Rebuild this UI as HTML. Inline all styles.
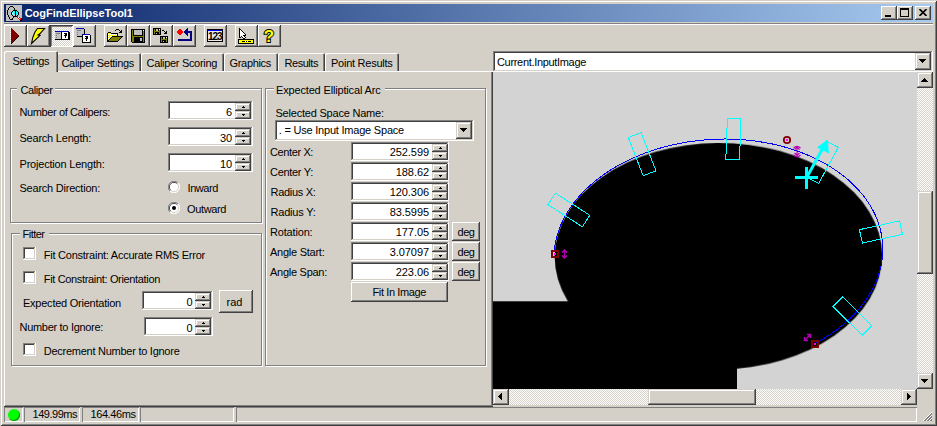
<!DOCTYPE html>
<html><head><meta charset="utf-8"><title>CogFindEllipseTool1</title><style>
html,body{margin:0;padding:0}
body{width:937px;height:426px;position:relative;overflow:hidden;background:#d4d0c8;font-family:"Liberation Sans",sans-serif;font-size:11px;color:#000}
.a,.t,.sk,.rb,.rb2,.grp,.tab{position:absolute;box-sizing:border-box}
.t{white-space:nowrap;line-height:12px;height:12px}
.tt{font-weight:bold;color:#fff}
.sk{box-shadow:inset -1px -1px 0 #fff,inset 1px 1px 0 #808080,inset -2px -2px 0 #d4d0c8,inset 2px 2px 0 #404040}
.rb{background:#d4d0c8;box-shadow:inset -1px -1px 0 #404040,inset 1px 1px 0 #fff,inset -2px -2px 0 #808080}
.rb2{background:#d4d0c8;box-shadow:inset -1px -1px 0 #404040,inset 1px 1px 0 #d4d0c8,inset -2px -2px 0 #808080,inset 2px 2px 0 #fff}
.grp{border:1px solid #808080;box-shadow:1px 1px 0 #fff,inset 1px 1px 0 #fff}
.dith{background:repeating-conic-gradient(#fff 0% 25%,#d4d0c8 0% 50%) 0 0/2px 2px}
.tab{background:#d4d0c8;border-top-left-radius:2px;border-top-right-radius:2px;box-shadow:inset 1px 1px 0 #fff,inset -1px 0 0 #404040,inset -2px 0 0 #808080}
</style></head><body>
<div class="a" style="left:0px;top:0px;width:937px;height:426px;background:#d4d0c8;box-shadow:inset 1px 1px 0 #d4d0c8,inset -1px -1px 0 #404040,inset 2px 2px 0 #fff,inset -2px -2px 0 #808080"></div>
<div class="a" style="left:4px;top:4px;width:929px;height:18px;background:linear-gradient(90deg,#0a246a,#a6caf0);"></div>
<div class="rb" style="left:881px;top:6px;width:16px;height:14px"></div>
<div class="rb" style="left:897px;top:6px;width:16px;height:14px"></div>
<div class="rb" style="left:915px;top:6px;width:16px;height:14px"></div>
<div class="a" style="left:885px;top:15px;width:6px;height:2px;background:#000;"></div>
<div class="a" style="left:900px;top:8px;width:9px;height:9px;border:1px solid #000;border-top-width:2px;box-sizing:border-box"></div>
<svg class="a" style="left:919px;top:9px" width="8" height="7" shape-rendering="crispEdges"><path d="M0.5 0 L7.5 7 M7.5 0 L0.5 7" stroke="#000" stroke-width="1.6" shape-rendering="auto"/></svg>
<div class="a" style="left:4px;top:23px;width:929px;height:1px;background:#808080;"></div>
<div class="a" style="left:4px;top:24px;width:929px;height:1px;background:#fff;"></div>
<div class="rb" style="left:4px;top:25px;width:23px;height:22px"></div>
<div class="rb" style="left:27px;top:25px;width:23px;height:22px"></div>
<div class="rb" style="left:73px;top:25px;width:23px;height:22px"></div>
<div class="rb" style="left:104px;top:25px;width:23px;height:22px"></div>
<div class="rb" style="left:127px;top:25px;width:23px;height:22px"></div>
<div class="rb" style="left:150px;top:25px;width:23px;height:22px"></div>
<div class="rb" style="left:173px;top:25px;width:23px;height:22px"></div>
<div class="rb" style="left:204px;top:25px;width:23px;height:22px"></div>
<div class="rb" style="left:235px;top:25px;width:23px;height:22px"></div>
<div class="rb" style="left:258px;top:25px;width:23px;height:22px"></div>
<div class="a dith" style="left:50px;top:25px;width:23px;height:22px;box-shadow:inset 1px 1px 0 #404040,inset -1px -1px 0 #fff,inset 2px 2px 0 #808080"></div>
<svg class="a" style="left:6px;top:5px;" width="16" height="16" shape-rendering="crispEdges"><rect x="0" y="0" width="16" height="1" fill="#c0c0c0"/><rect x="0" y="1" width="4" height="1" fill="#c0c0c0"/><rect x="4" y="1" width="3" height="1" fill="#000"/><rect x="7" y="1" width="9" height="1" fill="#c0c0c0"/><rect x="0" y="2" width="3" height="1" fill="#c0c0c0"/><rect x="3" y="2" width="1" height="1" fill="#000"/><rect x="4" y="2" width="3" height="1" fill="#c0c0c0"/><rect x="7" y="2" width="1" height="1" fill="#000"/><rect x="8" y="2" width="8" height="1" fill="#c0c0c0"/><rect x="0" y="3" width="2" height="1" fill="#c0c0c0"/><rect x="2" y="3" width="1" height="1" fill="#000"/><rect x="3" y="3" width="5" height="1" fill="#c0c0c0"/><rect x="8" y="3" width="1" height="1" fill="#000"/><rect x="9" y="3" width="7" height="1" fill="#c0c0c0"/><rect x="0" y="4" width="2" height="1" fill="#c0c0c0"/><rect x="2" y="4" width="1" height="1" fill="#000"/><rect x="3" y="4" width="5" height="1" fill="#c0c0c0"/><rect x="8" y="4" width="1" height="1" fill="#000"/><rect x="9" y="4" width="7" height="1" fill="#c0c0c0"/><rect x="0" y="5" width="1" height="1" fill="#c0c0c0"/><rect x="1" y="5" width="1" height="1" fill="#000"/><rect x="2" y="5" width="5" height="1" fill="#c0c0c0"/><rect x="7" y="5" width="4" height="1" fill="#000"/><rect x="11" y="5" width="5" height="1" fill="#c0c0c0"/><rect x="0" y="6" width="1" height="1" fill="#c0c0c0"/><rect x="1" y="6" width="1" height="1" fill="#000"/><rect x="2" y="6" width="4" height="1" fill="#c0c0c0"/><rect x="6" y="6" width="1" height="1" fill="#000"/><rect x="7" y="6" width="2" height="1" fill="#00ffff"/><rect x="9" y="6" width="1" height="1" fill="#000"/><rect x="10" y="6" width="1" height="1" fill="#00ffff"/><rect x="11" y="6" width="1" height="1" fill="#000"/><rect x="12" y="6" width="4" height="1" fill="#c0c0c0"/><rect x="0" y="7" width="1" height="1" fill="#c0c0c0"/><rect x="1" y="7" width="1" height="1" fill="#000"/><rect x="2" y="7" width="3" height="1" fill="#c0c0c0"/><rect x="5" y="7" width="1" height="1" fill="#000"/><rect x="6" y="7" width="1" height="1" fill="#00ffff"/><rect x="7" y="7" width="1" height="1" fill="#fff"/><rect x="8" y="7" width="1" height="1" fill="#00ffff"/><rect x="9" y="7" width="1" height="1" fill="#000"/><rect x="10" y="7" width="2" height="1" fill="#00ffff"/><rect x="12" y="7" width="1" height="1" fill="#000"/><rect x="13" y="7" width="3" height="1" fill="#c0c0c0"/><rect x="0" y="8" width="1" height="1" fill="#c0c0c0"/><rect x="1" y="8" width="1" height="1" fill="#000"/><rect x="2" y="8" width="3" height="1" fill="#c0c0c0"/><rect x="5" y="8" width="1" height="1" fill="#000"/><rect x="6" y="8" width="1" height="1" fill="#fff"/><rect x="7" y="8" width="2" height="1" fill="#00ffff"/><rect x="9" y="8" width="1" height="1" fill="#000"/><rect x="10" y="8" width="2" height="1" fill="#00ffff"/><rect x="12" y="8" width="1" height="1" fill="#000"/><rect x="13" y="8" width="3" height="1" fill="#c0c0c0"/><rect x="0" y="9" width="1" height="1" fill="#c0c0c0"/><rect x="1" y="9" width="1" height="1" fill="#000"/><rect x="2" y="9" width="3" height="1" fill="#c0c0c0"/><rect x="5" y="9" width="1" height="1" fill="#000"/><rect x="6" y="9" width="1" height="1" fill="#00ffff"/><rect x="7" y="9" width="1" height="1" fill="#fff"/><rect x="8" y="9" width="1" height="1" fill="#c0c0c0"/><rect x="9" y="9" width="1" height="1" fill="#000"/><rect x="10" y="9" width="1" height="1" fill="#00ffff"/><rect x="11" y="9" width="1" height="1" fill="#c0c0c0"/><rect x="12" y="9" width="1" height="1" fill="#000"/><rect x="13" y="9" width="3" height="1" fill="#c0c0c0"/><rect x="0" y="10" width="2" height="1" fill="#c0c0c0"/><rect x="2" y="10" width="1" height="1" fill="#000"/><rect x="3" y="10" width="3" height="1" fill="#c0c0c0"/><rect x="6" y="10" width="1" height="1" fill="#000"/><rect x="7" y="10" width="2" height="1" fill="#c0c0c0"/><rect x="9" y="10" width="1" height="1" fill="#000"/><rect x="10" y="10" width="1" height="1" fill="#c0c0c0"/><rect x="11" y="10" width="1" height="1" fill="#000"/><rect x="12" y="10" width="4" height="1" fill="#c0c0c0"/><rect x="0" y="11" width="2" height="1" fill="#c0c0c0"/><rect x="2" y="11" width="1" height="1" fill="#000"/><rect x="3" y="11" width="4" height="1" fill="#c0c0c0"/><rect x="7" y="11" width="4" height="1" fill="#000"/><rect x="11" y="11" width="1" height="1" fill="#ff0000"/><rect x="12" y="11" width="4" height="1" fill="#c0c0c0"/><rect x="0" y="12" width="3" height="1" fill="#c0c0c0"/><rect x="3" y="12" width="1" height="1" fill="#000"/><rect x="4" y="12" width="3" height="1" fill="#c0c0c0"/><rect x="7" y="12" width="1" height="1" fill="#000"/><rect x="8" y="12" width="3" height="1" fill="#c0c0c0"/><rect x="11" y="12" width="1" height="1" fill="#ff0000"/><rect x="12" y="12" width="1" height="1" fill="#fff"/><rect x="13" y="12" width="1" height="1" fill="#ff0000"/><rect x="14" y="12" width="2" height="1" fill="#c0c0c0"/><rect x="0" y="13" width="3" height="1" fill="#c0c0c0"/><rect x="3" y="13" width="1" height="1" fill="#000"/><rect x="4" y="13" width="2" height="1" fill="#c0c0c0"/><rect x="6" y="13" width="1" height="1" fill="#000"/><rect x="7" y="13" width="5" height="1" fill="#c0c0c0"/><rect x="12" y="13" width="1" height="1" fill="#ff0000"/><rect x="13" y="13" width="1" height="1" fill="#fff"/><rect x="14" y="13" width="1" height="1" fill="#ff0000"/><rect x="15" y="13" width="1" height="1" fill="#000"/><rect x="0" y="14" width="4" height="1" fill="#c0c0c0"/><rect x="4" y="14" width="3" height="1" fill="#000"/><rect x="7" y="14" width="6" height="1" fill="#c0c0c0"/><rect x="13" y="14" width="2" height="1" fill="#ff0000"/><rect x="15" y="14" width="1" height="1" fill="#000"/><rect x="0" y="15" width="14" height="1" fill="#c0c0c0"/><rect x="14" y="15" width="2" height="1" fill="#000"/></svg>
<svg class="a" style="left:10px;top:28px;" width="9" height="16" shape-rendering="crispEdges"><rect x="0" y="0" width="1" height="1" fill="#fff"/><rect x="1" y="0" width="1" height="1" fill="#800000"/><rect x="1" y="1" width="2" height="1" fill="#800000"/><rect x="0" y="2" width="1" height="1" fill="#fff"/><rect x="1" y="2" width="3" height="1" fill="#800000"/><rect x="1" y="3" width="4" height="1" fill="#800000"/><rect x="0" y="4" width="1" height="1" fill="#fff"/><rect x="1" y="4" width="5" height="1" fill="#800000"/><rect x="1" y="5" width="6" height="1" fill="#800000"/><rect x="0" y="6" width="1" height="1" fill="#fff"/><rect x="1" y="6" width="7" height="1" fill="#800000"/><rect x="1" y="7" width="8" height="1" fill="#800000"/><rect x="0" y="8" width="1" height="1" fill="#fff"/><rect x="1" y="8" width="7" height="1" fill="#800000"/><rect x="8" y="8" width="1" height="1" fill="#000"/><rect x="1" y="9" width="6" height="1" fill="#800000"/><rect x="7" y="9" width="1" height="1" fill="#000"/><rect x="0" y="10" width="1" height="1" fill="#fff"/><rect x="1" y="10" width="5" height="1" fill="#800000"/><rect x="6" y="10" width="1" height="1" fill="#000"/><rect x="1" y="11" width="4" height="1" fill="#800000"/><rect x="5" y="11" width="1" height="1" fill="#000"/><rect x="0" y="12" width="1" height="1" fill="#fff"/><rect x="1" y="12" width="3" height="1" fill="#800000"/><rect x="4" y="12" width="1" height="1" fill="#000"/><rect x="1" y="13" width="2" height="1" fill="#800000"/><rect x="3" y="13" width="1" height="1" fill="#000"/><rect x="0" y="14" width="1" height="1" fill="#fff"/><rect x="1" y="14" width="1" height="1" fill="#800000"/><rect x="2" y="14" width="1" height="1" fill="#000"/><rect x="1" y="15" width="1" height="1" fill="#000"/></svg>
<svg class="a" style="left:27px;top:25px" width="23" height="22"><polygon points="10.5,3.5 17.5,3.5 12.8,8.8 11,10 13,10.3 4.5,18.5 5.8,12.5 8,7" fill="#ffff00" stroke="#000" stroke-width="1.1" stroke-linejoin="miter"/></svg>
<svg class="a" style="left:55px;top:31px;" width="15" height="9" shape-rendering="crispEdges"><rect x="0" y="0" width="14" height="1" fill="#0000b0"/><rect x="0" y="1" width="6" height="1" fill="#c0c0c0"/><rect x="6" y="1" width="1" height="1" fill="#000"/><rect x="7" y="1" width="6" height="1" fill="#fff"/><rect x="13" y="1" width="2" height="1" fill="#000"/><rect x="0" y="2" width="1" height="1" fill="#c0c0c0"/><rect x="1" y="2" width="4" height="1" fill="#808080"/><rect x="5" y="2" width="1" height="1" fill="#c0c0c0"/><rect x="6" y="2" width="1" height="1" fill="#000"/><rect x="7" y="2" width="2" height="1" fill="#fff"/><rect x="9" y="2" width="3" height="1" fill="#000"/><rect x="12" y="2" width="1" height="1" fill="#fff"/><rect x="13" y="2" width="2" height="1" fill="#000"/><rect x="0" y="3" width="6" height="1" fill="#c0c0c0"/><rect x="6" y="3" width="1" height="1" fill="#000"/><rect x="7" y="3" width="3" height="1" fill="#fff"/><rect x="10" y="3" width="2" height="1" fill="#000"/><rect x="12" y="3" width="1" height="1" fill="#fff"/><rect x="13" y="3" width="2" height="1" fill="#000"/><rect x="0" y="4" width="1" height="1" fill="#c0c0c0"/><rect x="1" y="4" width="1" height="1" fill="#808080"/><rect x="2" y="4" width="4" height="1" fill="#c0c0c0"/><rect x="6" y="4" width="1" height="1" fill="#000"/><rect x="7" y="4" width="2" height="1" fill="#fff"/><rect x="9" y="4" width="3" height="1" fill="#000"/><rect x="12" y="4" width="1" height="1" fill="#fff"/><rect x="13" y="4" width="2" height="1" fill="#000"/><rect x="0" y="5" width="6" height="1" fill="#c0c0c0"/><rect x="6" y="5" width="1" height="1" fill="#000"/><rect x="7" y="5" width="3" height="1" fill="#fff"/><rect x="10" y="5" width="1" height="1" fill="#000"/><rect x="11" y="5" width="2" height="1" fill="#fff"/><rect x="13" y="5" width="2" height="1" fill="#000"/><rect x="0" y="6" width="1" height="1" fill="#c0c0c0"/><rect x="1" y="6" width="1" height="1" fill="#808080"/><rect x="2" y="6" width="4" height="1" fill="#c0c0c0"/><rect x="6" y="6" width="1" height="1" fill="#000"/><rect x="7" y="6" width="3" height="1" fill="#fff"/><rect x="10" y="6" width="1" height="1" fill="#000"/><rect x="11" y="6" width="2" height="1" fill="#fff"/><rect x="13" y="6" width="2" height="1" fill="#000"/><rect x="0" y="7" width="6" height="1" fill="#c0c0c0"/><rect x="6" y="7" width="1" height="1" fill="#000"/><rect x="7" y="7" width="6" height="1" fill="#fff"/><rect x="13" y="7" width="2" height="1" fill="#000"/><rect x="0" y="8" width="15" height="1" fill="#000"/></svg>
<svg class="a" style="left:76px;top:28px;" width="9" height="9" shape-rendering="crispEdges"><rect x="0" y="0" width="8" height="1" fill="#0000b0"/><rect x="0" y="1" width="8" height="1" fill="#c0c0c0"/><rect x="8" y="1" width="1" height="1" fill="#000"/><rect x="0" y="2" width="1" height="1" fill="#c0c0c0"/><rect x="1" y="2" width="4" height="1" fill="#808080"/><rect x="5" y="2" width="3" height="1" fill="#c0c0c0"/><rect x="8" y="2" width="1" height="1" fill="#000"/><rect x="0" y="3" width="8" height="1" fill="#c0c0c0"/><rect x="8" y="3" width="1" height="1" fill="#000"/><rect x="0" y="4" width="1" height="1" fill="#c0c0c0"/><rect x="1" y="4" width="1" height="1" fill="#808080"/><rect x="2" y="4" width="6" height="1" fill="#c0c0c0"/><rect x="8" y="4" width="1" height="1" fill="#000"/><rect x="0" y="5" width="8" height="1" fill="#c0c0c0"/><rect x="8" y="5" width="1" height="1" fill="#000"/><rect x="0" y="6" width="1" height="1" fill="#c0c0c0"/><rect x="1" y="6" width="1" height="1" fill="#808080"/><rect x="2" y="6" width="6" height="1" fill="#c0c0c0"/><rect x="8" y="6" width="1" height="1" fill="#000"/><rect x="0" y="7" width="8" height="1" fill="#c0c0c0"/><rect x="8" y="7" width="1" height="1" fill="#000"/><rect x="1" y="8" width="8" height="1" fill="#000"/></svg>
<svg class="a" style="left:82px;top:34px;" width="9" height="9" shape-rendering="crispEdges"><rect x="0" y="0" width="8" height="1" fill="#0000b0"/><rect x="0" y="1" width="1" height="1" fill="#000"/><rect x="1" y="1" width="7" height="1" fill="#fff"/><rect x="8" y="1" width="1" height="1" fill="#000"/><rect x="0" y="2" width="1" height="1" fill="#000"/><rect x="1" y="2" width="2" height="1" fill="#fff"/><rect x="3" y="2" width="3" height="1" fill="#000"/><rect x="6" y="2" width="2" height="1" fill="#fff"/><rect x="8" y="2" width="1" height="1" fill="#000"/><rect x="0" y="3" width="1" height="1" fill="#000"/><rect x="1" y="3" width="3" height="1" fill="#fff"/><rect x="4" y="3" width="2" height="1" fill="#000"/><rect x="6" y="3" width="2" height="1" fill="#fff"/><rect x="8" y="3" width="1" height="1" fill="#000"/><rect x="0" y="4" width="1" height="1" fill="#000"/><rect x="1" y="4" width="2" height="1" fill="#fff"/><rect x="3" y="4" width="3" height="1" fill="#000"/><rect x="6" y="4" width="2" height="1" fill="#fff"/><rect x="8" y="4" width="1" height="1" fill="#000"/><rect x="0" y="5" width="1" height="1" fill="#000"/><rect x="1" y="5" width="3" height="1" fill="#fff"/><rect x="4" y="5" width="1" height="1" fill="#000"/><rect x="5" y="5" width="3" height="1" fill="#fff"/><rect x="8" y="5" width="1" height="1" fill="#000"/><rect x="0" y="6" width="1" height="1" fill="#000"/><rect x="1" y="6" width="3" height="1" fill="#fff"/><rect x="4" y="6" width="1" height="1" fill="#000"/><rect x="5" y="6" width="3" height="1" fill="#fff"/><rect x="8" y="6" width="1" height="1" fill="#000"/><rect x="0" y="7" width="1" height="1" fill="#000"/><rect x="1" y="7" width="7" height="1" fill="#fff"/><rect x="8" y="7" width="1" height="1" fill="#000"/><rect x="0" y="8" width="9" height="1" fill="#000"/></svg>
<svg class="a" style="left:107px;top:29px;" width="16" height="13" shape-rendering="crispEdges"><rect x="9" y="0" width="3" height="1" fill="#000"/><rect x="8" y="1" width="1" height="1" fill="#000"/><rect x="12" y="1" width="1" height="1" fill="#000"/><rect x="14" y="1" width="1" height="1" fill="#000"/><rect x="13" y="2" width="2" height="1" fill="#000"/><rect x="1" y="3" width="3" height="1" fill="#000"/><rect x="12" y="3" width="3" height="1" fill="#000"/><rect x="0" y="4" width="1" height="1" fill="#000"/><rect x="1" y="4" width="1" height="1" fill="#ffff00"/><rect x="2" y="4" width="1" height="1" fill="#fff"/><rect x="3" y="4" width="1" height="1" fill="#ffff00"/><rect x="4" y="4" width="7" height="1" fill="#000"/><rect x="0" y="5" width="1" height="1" fill="#000"/><rect x="1" y="5" width="1" height="1" fill="#fff"/><rect x="2" y="5" width="1" height="1" fill="#ffff00"/><rect x="3" y="5" width="1" height="1" fill="#fff"/><rect x="4" y="5" width="1" height="1" fill="#ffff00"/><rect x="5" y="5" width="1" height="1" fill="#fff"/><rect x="6" y="5" width="1" height="1" fill="#ffff00"/><rect x="7" y="5" width="1" height="1" fill="#fff"/><rect x="8" y="5" width="1" height="1" fill="#ffff00"/><rect x="9" y="5" width="1" height="1" fill="#fff"/><rect x="10" y="5" width="1" height="1" fill="#000"/><rect x="0" y="6" width="1" height="1" fill="#000"/><rect x="1" y="6" width="1" height="1" fill="#ffff00"/><rect x="2" y="6" width="1" height="1" fill="#fff"/><rect x="3" y="6" width="1" height="1" fill="#ffff00"/><rect x="4" y="6" width="1" height="1" fill="#fff"/><rect x="5" y="6" width="1" height="1" fill="#ffff00"/><rect x="6" y="6" width="1" height="1" fill="#fff"/><rect x="7" y="6" width="1" height="1" fill="#ffff00"/><rect x="8" y="6" width="1" height="1" fill="#fff"/><rect x="9" y="6" width="1" height="1" fill="#ffff00"/><rect x="10" y="6" width="1" height="1" fill="#000"/><rect x="0" y="7" width="1" height="1" fill="#000"/><rect x="1" y="7" width="1" height="1" fill="#fff"/><rect x="2" y="7" width="1" height="1" fill="#ffff00"/><rect x="3" y="7" width="1" height="1" fill="#fff"/><rect x="4" y="7" width="1" height="1" fill="#ffff00"/><rect x="5" y="7" width="11" height="1" fill="#000"/><rect x="0" y="8" width="1" height="1" fill="#000"/><rect x="1" y="8" width="1" height="1" fill="#ffff00"/><rect x="2" y="8" width="1" height="1" fill="#fff"/><rect x="3" y="8" width="1" height="1" fill="#ffff00"/><rect x="4" y="8" width="1" height="1" fill="#000"/><rect x="5" y="8" width="9" height="1" fill="#808000"/><rect x="14" y="8" width="1" height="1" fill="#000"/><rect x="0" y="9" width="1" height="1" fill="#000"/><rect x="1" y="9" width="1" height="1" fill="#fff"/><rect x="2" y="9" width="1" height="1" fill="#ffff00"/><rect x="3" y="9" width="1" height="1" fill="#000"/><rect x="4" y="9" width="9" height="1" fill="#808000"/><rect x="13" y="9" width="1" height="1" fill="#000"/><rect x="0" y="10" width="1" height="1" fill="#000"/><rect x="1" y="10" width="1" height="1" fill="#ffff00"/><rect x="2" y="10" width="1" height="1" fill="#000"/><rect x="3" y="10" width="9" height="1" fill="#808000"/><rect x="12" y="10" width="1" height="1" fill="#000"/><rect x="0" y="11" width="2" height="1" fill="#000"/><rect x="2" y="11" width="9" height="1" fill="#808000"/><rect x="11" y="11" width="1" height="1" fill="#000"/><rect x="0" y="12" width="11" height="1" fill="#000"/></svg>
<svg class="a" style="left:131px;top:29px;" width="14" height="14" shape-rendering="crispEdges"><rect x="0" y="0" width="14" height="1" fill="#000"/><rect x="0" y="1" width="1" height="1" fill="#000"/><rect x="1" y="1" width="1" height="1" fill="#808000"/><rect x="2" y="1" width="1" height="1" fill="#000"/><rect x="3" y="1" width="8" height="1" fill="#c0c0c0"/><rect x="11" y="1" width="1" height="1" fill="#000"/><rect x="12" y="1" width="1" height="1" fill="#fff"/><rect x="13" y="1" width="1" height="1" fill="#000"/><rect x="0" y="2" width="1" height="1" fill="#000"/><rect x="1" y="2" width="1" height="1" fill="#808000"/><rect x="2" y="2" width="1" height="1" fill="#000"/><rect x="3" y="2" width="8" height="1" fill="#c0c0c0"/><rect x="11" y="2" width="1" height="1" fill="#000"/><rect x="12" y="2" width="1" height="1" fill="#808000"/><rect x="13" y="2" width="1" height="1" fill="#000"/><rect x="0" y="3" width="1" height="1" fill="#000"/><rect x="1" y="3" width="1" height="1" fill="#808000"/><rect x="2" y="3" width="1" height="1" fill="#000"/><rect x="3" y="3" width="8" height="1" fill="#c0c0c0"/><rect x="11" y="3" width="1" height="1" fill="#000"/><rect x="12" y="3" width="1" height="1" fill="#808000"/><rect x="13" y="3" width="1" height="1" fill="#000"/><rect x="0" y="4" width="1" height="1" fill="#000"/><rect x="1" y="4" width="1" height="1" fill="#808000"/><rect x="2" y="4" width="1" height="1" fill="#000"/><rect x="3" y="4" width="8" height="1" fill="#c0c0c0"/><rect x="11" y="4" width="1" height="1" fill="#000"/><rect x="12" y="4" width="1" height="1" fill="#808000"/><rect x="13" y="4" width="1" height="1" fill="#000"/><rect x="0" y="5" width="1" height="1" fill="#000"/><rect x="1" y="5" width="1" height="1" fill="#808000"/><rect x="2" y="5" width="1" height="1" fill="#000"/><rect x="3" y="5" width="8" height="1" fill="#c0c0c0"/><rect x="11" y="5" width="1" height="1" fill="#000"/><rect x="12" y="5" width="1" height="1" fill="#808000"/><rect x="13" y="5" width="1" height="1" fill="#000"/><rect x="0" y="6" width="1" height="1" fill="#000"/><rect x="1" y="6" width="1" height="1" fill="#808000"/><rect x="2" y="6" width="10" height="1" fill="#000"/><rect x="12" y="6" width="1" height="1" fill="#808000"/><rect x="13" y="6" width="1" height="1" fill="#000"/><rect x="0" y="7" width="1" height="1" fill="#000"/><rect x="1" y="7" width="12" height="1" fill="#808000"/><rect x="13" y="7" width="1" height="1" fill="#000"/><rect x="0" y="8" width="1" height="1" fill="#000"/><rect x="1" y="8" width="2" height="1" fill="#808000"/><rect x="3" y="8" width="9" height="1" fill="#000"/><rect x="12" y="8" width="1" height="1" fill="#808000"/><rect x="13" y="8" width="1" height="1" fill="#000"/><rect x="0" y="9" width="1" height="1" fill="#000"/><rect x="1" y="9" width="2" height="1" fill="#808000"/><rect x="3" y="9" width="6" height="1" fill="#000"/><rect x="9" y="9" width="2" height="1" fill="#c0c0c0"/><rect x="11" y="9" width="1" height="1" fill="#000"/><rect x="12" y="9" width="1" height="1" fill="#808000"/><rect x="13" y="9" width="1" height="1" fill="#000"/><rect x="0" y="10" width="1" height="1" fill="#000"/><rect x="1" y="10" width="2" height="1" fill="#808000"/><rect x="3" y="10" width="6" height="1" fill="#000"/><rect x="9" y="10" width="2" height="1" fill="#c0c0c0"/><rect x="11" y="10" width="1" height="1" fill="#000"/><rect x="12" y="10" width="1" height="1" fill="#808000"/><rect x="13" y="10" width="1" height="1" fill="#000"/><rect x="0" y="11" width="1" height="1" fill="#000"/><rect x="1" y="11" width="2" height="1" fill="#808000"/><rect x="3" y="11" width="6" height="1" fill="#000"/><rect x="9" y="11" width="2" height="1" fill="#c0c0c0"/><rect x="11" y="11" width="1" height="1" fill="#000"/><rect x="12" y="11" width="1" height="1" fill="#808000"/><rect x="13" y="11" width="1" height="1" fill="#000"/><rect x="0" y="12" width="1" height="1" fill="#000"/><rect x="1" y="12" width="2" height="1" fill="#808000"/><rect x="3" y="12" width="9" height="1" fill="#000"/><rect x="12" y="12" width="1" height="1" fill="#808000"/><rect x="13" y="12" width="1" height="1" fill="#000"/><rect x="1" y="13" width="13" height="1" fill="#000"/></svg>
<svg class="a" style="left:153px;top:28px;" width="8" height="7" shape-rendering="crispEdges"><rect x="0" y="0" width="8" height="1" fill="#000"/><rect x="0" y="1" width="1" height="1" fill="#000"/><rect x="1" y="1" width="1" height="1" fill="#808000"/><rect x="2" y="1" width="1" height="1" fill="#000"/><rect x="3" y="1" width="2" height="1" fill="#c0c0c0"/><rect x="5" y="1" width="1" height="1" fill="#000"/><rect x="6" y="1" width="1" height="1" fill="#fff"/><rect x="7" y="1" width="1" height="1" fill="#000"/><rect x="0" y="2" width="1" height="1" fill="#000"/><rect x="1" y="2" width="1" height="1" fill="#808000"/><rect x="2" y="2" width="1" height="1" fill="#000"/><rect x="3" y="2" width="2" height="1" fill="#c0c0c0"/><rect x="5" y="2" width="1" height="1" fill="#000"/><rect x="6" y="2" width="1" height="1" fill="#808000"/><rect x="7" y="2" width="1" height="1" fill="#000"/><rect x="0" y="3" width="1" height="1" fill="#000"/><rect x="1" y="3" width="6" height="1" fill="#808000"/><rect x="7" y="3" width="1" height="1" fill="#000"/><rect x="0" y="4" width="1" height="1" fill="#000"/><rect x="1" y="4" width="1" height="1" fill="#808000"/><rect x="2" y="4" width="4" height="1" fill="#000"/><rect x="6" y="4" width="1" height="1" fill="#808000"/><rect x="7" y="4" width="1" height="1" fill="#000"/><rect x="0" y="5" width="1" height="1" fill="#000"/><rect x="1" y="5" width="1" height="1" fill="#808000"/><rect x="2" y="5" width="1" height="1" fill="#000"/><rect x="3" y="5" width="1" height="1" fill="#c0c0c0"/><rect x="4" y="5" width="2" height="1" fill="#000"/><rect x="6" y="5" width="1" height="1" fill="#808000"/><rect x="7" y="5" width="1" height="1" fill="#000"/><rect x="0" y="6" width="8" height="1" fill="#000"/></svg>
<svg class="a" style="left:160px;top:36px;" width="8" height="7" shape-rendering="crispEdges"><rect x="0" y="0" width="8" height="1" fill="#000"/><rect x="0" y="1" width="1" height="1" fill="#000"/><rect x="1" y="1" width="1" height="1" fill="#808000"/><rect x="2" y="1" width="1" height="1" fill="#000"/><rect x="3" y="1" width="2" height="1" fill="#c0c0c0"/><rect x="5" y="1" width="1" height="1" fill="#000"/><rect x="6" y="1" width="1" height="1" fill="#fff"/><rect x="7" y="1" width="1" height="1" fill="#000"/><rect x="0" y="2" width="1" height="1" fill="#000"/><rect x="1" y="2" width="1" height="1" fill="#808000"/><rect x="2" y="2" width="1" height="1" fill="#000"/><rect x="3" y="2" width="2" height="1" fill="#c0c0c0"/><rect x="5" y="2" width="1" height="1" fill="#000"/><rect x="6" y="2" width="1" height="1" fill="#808000"/><rect x="7" y="2" width="1" height="1" fill="#000"/><rect x="0" y="3" width="1" height="1" fill="#000"/><rect x="1" y="3" width="6" height="1" fill="#808000"/><rect x="7" y="3" width="1" height="1" fill="#000"/><rect x="0" y="4" width="1" height="1" fill="#000"/><rect x="1" y="4" width="1" height="1" fill="#808000"/><rect x="2" y="4" width="4" height="1" fill="#000"/><rect x="6" y="4" width="1" height="1" fill="#808000"/><rect x="7" y="4" width="1" height="1" fill="#000"/><rect x="0" y="5" width="1" height="1" fill="#000"/><rect x="1" y="5" width="1" height="1" fill="#808000"/><rect x="2" y="5" width="1" height="1" fill="#000"/><rect x="3" y="5" width="1" height="1" fill="#c0c0c0"/><rect x="4" y="5" width="2" height="1" fill="#000"/><rect x="6" y="5" width="1" height="1" fill="#808000"/><rect x="7" y="5" width="1" height="1" fill="#000"/><rect x="0" y="6" width="8" height="1" fill="#000"/></svg>
<svg class="a" style="left:162px;top:30px;" width="5" height="4" shape-rendering="crispEdges"><rect x="0" y="0" width="2" height="1" fill="#000"/><rect x="2" y="1" width="1" height="1" fill="#000"/><rect x="4" y="1" width="1" height="1" fill="#000"/><rect x="3" y="2" width="2" height="1" fill="#000"/><rect x="2" y="3" width="3" height="1" fill="#000"/></svg>
<svg class="a" style="left:177px;top:28px;" width="15" height="13" shape-rendering="crispEdges"><rect x="10" y="0" width="1" height="1" fill="#000080"/><rect x="2" y="1" width="2" height="1" fill="#ff0000"/><rect x="9" y="1" width="2" height="1" fill="#000080"/><rect x="1" y="2" width="4" height="1" fill="#ff0000"/><rect x="8" y="2" width="3" height="1" fill="#000080"/><rect x="0" y="3" width="6" height="1" fill="#ff0000"/><rect x="7" y="3" width="8" height="1" fill="#000080"/><rect x="0" y="4" width="6" height="1" fill="#ff0000"/><rect x="7" y="4" width="8" height="1" fill="#000080"/><rect x="1" y="5" width="4" height="1" fill="#ff0000"/><rect x="8" y="5" width="3" height="1" fill="#000080"/><rect x="13" y="5" width="2" height="1" fill="#000080"/><rect x="2" y="6" width="2" height="1" fill="#ff0000"/><rect x="9" y="6" width="2" height="1" fill="#000080"/><rect x="13" y="6" width="2" height="1" fill="#000080"/><rect x="10" y="7" width="1" height="1" fill="#000080"/><rect x="13" y="7" width="2" height="1" fill="#000080"/><rect x="13" y="8" width="2" height="1" fill="#000080"/><rect x="13" y="9" width="2" height="1" fill="#000080"/><rect x="13" y="10" width="2" height="1" fill="#000080"/><rect x="1" y="11" width="14" height="1" fill="#000080"/><rect x="1" y="12" width="14" height="1" fill="#000080"/></svg>
<svg class="a" style="left:207px;top:29px;" width="16" height="13" shape-rendering="crispEdges"><rect x="0" y="0" width="16" height="1" fill="#000"/><rect x="0" y="1" width="1" height="1" fill="#000"/><rect x="1" y="1" width="14" height="1" fill="#0000ff"/><rect x="15" y="1" width="1" height="1" fill="#000"/><rect x="0" y="2" width="1" height="1" fill="#000"/><rect x="1" y="2" width="14" height="1" fill="#eceae6"/><rect x="15" y="2" width="1" height="1" fill="#000"/><rect x="0" y="3" width="1" height="1" fill="#000"/><rect x="1" y="3" width="14" height="1" fill="#eceae6"/><rect x="15" y="3" width="1" height="1" fill="#000"/><rect x="0" y="4" width="1" height="1" fill="#000"/><rect x="1" y="4" width="14" height="1" fill="#eceae6"/><rect x="15" y="4" width="1" height="1" fill="#000"/><rect x="0" y="5" width="1" height="1" fill="#000"/><rect x="1" y="5" width="14" height="1" fill="#eceae6"/><rect x="15" y="5" width="1" height="1" fill="#000"/><rect x="0" y="6" width="1" height="1" fill="#000"/><rect x="1" y="6" width="14" height="1" fill="#eceae6"/><rect x="15" y="6" width="1" height="1" fill="#000"/><rect x="0" y="7" width="1" height="1" fill="#000"/><rect x="1" y="7" width="14" height="1" fill="#eceae6"/><rect x="15" y="7" width="1" height="1" fill="#000"/><rect x="0" y="8" width="1" height="1" fill="#000"/><rect x="1" y="8" width="14" height="1" fill="#eceae6"/><rect x="15" y="8" width="1" height="1" fill="#000"/><rect x="0" y="9" width="1" height="1" fill="#000"/><rect x="1" y="9" width="14" height="1" fill="#eceae6"/><rect x="15" y="9" width="1" height="1" fill="#000"/><rect x="0" y="10" width="1" height="1" fill="#000"/><rect x="1" y="10" width="14" height="1" fill="#eceae6"/><rect x="15" y="10" width="1" height="1" fill="#000"/><rect x="0" y="11" width="1" height="1" fill="#000"/><rect x="1" y="11" width="14" height="1" fill="#eceae6"/><rect x="15" y="11" width="1" height="1" fill="#000"/><rect x="0" y="12" width="16" height="1" fill="#000"/></svg>
<span class="a" style="left:208px;top:32px;width:16px;height:10px;line-height:10px;font-size:10px;font-weight:bold;letter-spacing:-1px;white-space:nowrap;color:#000">123</span>
<svg class="a" style="left:238px;top:28px;" width="16" height="16" shape-rendering="crispEdges"><rect x="1" y="0" width="1" height="1" fill="#000"/><rect x="1" y="1" width="2" height="1" fill="#000"/><rect x="1" y="2" width="1" height="1" fill="#000"/><rect x="2" y="2" width="1" height="1" fill="#fff"/><rect x="3" y="2" width="1" height="1" fill="#000"/><rect x="1" y="3" width="1" height="1" fill="#000"/><rect x="2" y="3" width="2" height="1" fill="#fff"/><rect x="4" y="3" width="1" height="1" fill="#000"/><rect x="1" y="4" width="1" height="1" fill="#000"/><rect x="2" y="4" width="3" height="1" fill="#fff"/><rect x="5" y="4" width="1" height="1" fill="#000"/><rect x="1" y="5" width="1" height="1" fill="#000"/><rect x="2" y="5" width="4" height="1" fill="#fff"/><rect x="6" y="5" width="1" height="1" fill="#000"/><rect x="1" y="6" width="1" height="1" fill="#000"/><rect x="2" y="6" width="5" height="1" fill="#fff"/><rect x="7" y="6" width="1" height="1" fill="#000"/><rect x="1" y="7" width="1" height="1" fill="#000"/><rect x="2" y="7" width="3" height="1" fill="#fff"/><rect x="5" y="7" width="3" height="1" fill="#000"/><rect x="1" y="8" width="1" height="1" fill="#000"/><rect x="2" y="8" width="1" height="1" fill="#fff"/><rect x="3" y="8" width="1" height="1" fill="#000"/><rect x="4" y="8" width="2" height="1" fill="#fff"/><rect x="6" y="8" width="1" height="1" fill="#000"/><rect x="1" y="9" width="2" height="1" fill="#000"/><rect x="4" y="9" width="1" height="1" fill="#000"/><rect x="5" y="9" width="2" height="1" fill="#fff"/><rect x="7" y="9" width="1" height="1" fill="#000"/><rect x="5" y="10" width="2" height="1" fill="#000"/><rect x="0" y="11" width="16" height="1" fill="#000"/><rect x="0" y="12" width="1" height="1" fill="#000"/><rect x="1" y="12" width="14" height="1" fill="#ffff00"/><rect x="15" y="12" width="1" height="1" fill="#000"/><rect x="0" y="13" width="1" height="1" fill="#000"/><rect x="1" y="13" width="3" height="1" fill="#ffff00"/><rect x="4" y="13" width="3" height="1" fill="#000"/><rect x="7" y="13" width="1" height="1" fill="#ffff00"/><rect x="8" y="13" width="1" height="1" fill="#000"/><rect x="9" y="13" width="1" height="1" fill="#ffff00"/><rect x="10" y="13" width="3" height="1" fill="#000"/><rect x="13" y="13" width="2" height="1" fill="#ffff00"/><rect x="15" y="13" width="1" height="1" fill="#000"/><rect x="0" y="14" width="1" height="1" fill="#000"/><rect x="1" y="14" width="14" height="1" fill="#ffff00"/><rect x="15" y="14" width="1" height="1" fill="#000"/><rect x="0" y="15" width="16" height="1" fill="#000"/></svg>
<span class="a" style="left:258px;top:26px;width:22px;height:22px;line-height:22px;text-align:center;font-weight:bold;font-size:17px;color:#ffff00;-webkit-text-stroke:2px #000;paint-order:stroke fill">?</span>
<div class="a" style="left:4px;top:71px;width:489px;height:336px;background:#d4d0c8;box-shadow:inset 1px 1px 0 #fff,inset -1px -1px 0 #404040,inset -2px -2px 0 #808080"></div>
<div class="tab" style="left:57px;top:53px;width:84px;height:18px"></div>
<div class="tab" style="left:141px;top:53px;width:83px;height:18px"></div>
<div class="tab" style="left:224px;top:53px;width:54px;height:18px"></div>
<div class="tab" style="left:278px;top:53px;width:47px;height:18px"></div>
<div class="tab" style="left:325px;top:53px;width:74px;height:18px"></div>
<div class="tab" style="left:4px;top:51px;width:54px;height:21px"></div>
<div class="grp" style="left:10px;top:88px;width:252px;height:135px"></div><div class="a" style="left:17px;top:86px;width:38px;height:6px;background:#d4d0c8"></div>
<div class="grp" style="left:11px;top:233px;width:251px;height:133px"></div><div class="a" style="left:20px;top:231px;width:29px;height:6px;background:#d4d0c8"></div>
<div class="grp" style="left:265px;top:88px;width:221px;height:278px"></div><div class="a" style="left:274px;top:86px;width:111px;height:6px;background:#d4d0c8"></div>
<div class="sk" style="left:168px;top:101px;width:85px;height:19px;background:#fff;"></div><div class="rb2" style="left:235px;top:103px;width:16px;height:8px"></div><div class="rb2" style="left:235px;top:111px;width:16px;height:8px"></div><svg class="a" style="left:242px;top:106px;" width="3" height="2" shape-rendering="crispEdges"><rect x="1" y="0" width="1" height="1" fill="#000"/><rect x="0" y="1" width="3" height="1" fill="#000"/></svg><svg class="a" style="left:242px;top:114px;" width="3" height="2" shape-rendering="crispEdges"><rect x="0" y="0" width="3" height="1" fill="#000"/><rect x="1" y="1" width="1" height="1" fill="#000"/></svg>
<div class="sk" style="left:168px;top:127px;width:85px;height:19px;background:#fff;"></div><div class="rb2" style="left:235px;top:129px;width:16px;height:8px"></div><div class="rb2" style="left:235px;top:137px;width:16px;height:8px"></div><svg class="a" style="left:242px;top:132px;" width="3" height="2" shape-rendering="crispEdges"><rect x="1" y="0" width="1" height="1" fill="#000"/><rect x="0" y="1" width="3" height="1" fill="#000"/></svg><svg class="a" style="left:242px;top:140px;" width="3" height="2" shape-rendering="crispEdges"><rect x="0" y="0" width="3" height="1" fill="#000"/><rect x="1" y="1" width="1" height="1" fill="#000"/></svg>
<div class="sk" style="left:168px;top:153px;width:85px;height:19px;background:#fff;"></div><div class="rb2" style="left:235px;top:155px;width:16px;height:8px"></div><div class="rb2" style="left:235px;top:163px;width:16px;height:8px"></div><svg class="a" style="left:242px;top:158px;" width="3" height="2" shape-rendering="crispEdges"><rect x="1" y="0" width="1" height="1" fill="#000"/><rect x="0" y="1" width="3" height="1" fill="#000"/></svg><svg class="a" style="left:242px;top:166px;" width="3" height="2" shape-rendering="crispEdges"><rect x="0" y="0" width="3" height="1" fill="#000"/><rect x="1" y="1" width="1" height="1" fill="#000"/></svg>
<div class="sk" style="left:142px;top:291px;width:71px;height:19px;background:#fff;"></div><div class="rb2" style="left:195px;top:293px;width:16px;height:8px"></div><div class="rb2" style="left:195px;top:301px;width:16px;height:8px"></div><svg class="a" style="left:202px;top:296px;" width="3" height="2" shape-rendering="crispEdges"><rect x="1" y="0" width="1" height="1" fill="#000"/><rect x="0" y="1" width="3" height="1" fill="#000"/></svg><svg class="a" style="left:202px;top:304px;" width="3" height="2" shape-rendering="crispEdges"><rect x="0" y="0" width="3" height="1" fill="#000"/><rect x="1" y="1" width="1" height="1" fill="#000"/></svg>
<div class="sk" style="left:144px;top:317px;width:69px;height:19px;background:#fff;"></div><div class="rb2" style="left:195px;top:319px;width:16px;height:8px"></div><div class="rb2" style="left:195px;top:327px;width:16px;height:8px"></div><svg class="a" style="left:202px;top:322px;" width="3" height="2" shape-rendering="crispEdges"><rect x="1" y="0" width="1" height="1" fill="#000"/><rect x="0" y="1" width="3" height="1" fill="#000"/></svg><svg class="a" style="left:202px;top:330px;" width="3" height="2" shape-rendering="crispEdges"><rect x="0" y="0" width="3" height="1" fill="#000"/><rect x="1" y="1" width="1" height="1" fill="#000"/></svg>
<div class="sk" style="left:351px;top:142px;width:98px;height:19px;background:#fff;"></div><div class="rb2" style="left:432px;top:144px;width:16px;height:8px"></div><div class="rb2" style="left:432px;top:152px;width:16px;height:8px"></div><svg class="a" style="left:439px;top:147px;" width="3" height="2" shape-rendering="crispEdges"><rect x="1" y="0" width="1" height="1" fill="#000"/><rect x="0" y="1" width="3" height="1" fill="#000"/></svg><svg class="a" style="left:439px;top:155px;" width="3" height="2" shape-rendering="crispEdges"><rect x="0" y="0" width="3" height="1" fill="#000"/><rect x="1" y="1" width="1" height="1" fill="#000"/></svg>
<div class="sk" style="left:351px;top:162px;width:98px;height:19px;background:#fff;"></div><div class="rb2" style="left:432px;top:164px;width:16px;height:8px"></div><div class="rb2" style="left:432px;top:172px;width:16px;height:8px"></div><svg class="a" style="left:439px;top:167px;" width="3" height="2" shape-rendering="crispEdges"><rect x="1" y="0" width="1" height="1" fill="#000"/><rect x="0" y="1" width="3" height="1" fill="#000"/></svg><svg class="a" style="left:439px;top:175px;" width="3" height="2" shape-rendering="crispEdges"><rect x="0" y="0" width="3" height="1" fill="#000"/><rect x="1" y="1" width="1" height="1" fill="#000"/></svg>
<div class="sk" style="left:351px;top:182px;width:98px;height:19px;background:#fff;"></div><div class="rb2" style="left:432px;top:184px;width:16px;height:8px"></div><div class="rb2" style="left:432px;top:192px;width:16px;height:8px"></div><svg class="a" style="left:439px;top:187px;" width="3" height="2" shape-rendering="crispEdges"><rect x="1" y="0" width="1" height="1" fill="#000"/><rect x="0" y="1" width="3" height="1" fill="#000"/></svg><svg class="a" style="left:439px;top:195px;" width="3" height="2" shape-rendering="crispEdges"><rect x="0" y="0" width="3" height="1" fill="#000"/><rect x="1" y="1" width="1" height="1" fill="#000"/></svg>
<div class="sk" style="left:351px;top:202px;width:98px;height:19px;background:#fff;"></div><div class="rb2" style="left:432px;top:204px;width:16px;height:8px"></div><div class="rb2" style="left:432px;top:212px;width:16px;height:8px"></div><svg class="a" style="left:439px;top:207px;" width="3" height="2" shape-rendering="crispEdges"><rect x="1" y="0" width="1" height="1" fill="#000"/><rect x="0" y="1" width="3" height="1" fill="#000"/></svg><svg class="a" style="left:439px;top:215px;" width="3" height="2" shape-rendering="crispEdges"><rect x="0" y="0" width="3" height="1" fill="#000"/><rect x="1" y="1" width="1" height="1" fill="#000"/></svg>
<div class="sk" style="left:351px;top:222px;width:98px;height:19px;background:#fff;"></div><div class="rb2" style="left:432px;top:224px;width:16px;height:8px"></div><div class="rb2" style="left:432px;top:232px;width:16px;height:8px"></div><svg class="a" style="left:439px;top:227px;" width="3" height="2" shape-rendering="crispEdges"><rect x="1" y="0" width="1" height="1" fill="#000"/><rect x="0" y="1" width="3" height="1" fill="#000"/></svg><svg class="a" style="left:439px;top:235px;" width="3" height="2" shape-rendering="crispEdges"><rect x="0" y="0" width="3" height="1" fill="#000"/><rect x="1" y="1" width="1" height="1" fill="#000"/></svg>
<div class="sk" style="left:351px;top:242px;width:98px;height:19px;background:#fff;"></div><div class="rb2" style="left:432px;top:244px;width:16px;height:8px"></div><div class="rb2" style="left:432px;top:252px;width:16px;height:8px"></div><svg class="a" style="left:439px;top:247px;" width="3" height="2" shape-rendering="crispEdges"><rect x="1" y="0" width="1" height="1" fill="#000"/><rect x="0" y="1" width="3" height="1" fill="#000"/></svg><svg class="a" style="left:439px;top:255px;" width="3" height="2" shape-rendering="crispEdges"><rect x="0" y="0" width="3" height="1" fill="#000"/><rect x="1" y="1" width="1" height="1" fill="#000"/></svg>
<div class="sk" style="left:351px;top:262px;width:98px;height:19px;background:#fff;"></div><div class="rb2" style="left:432px;top:264px;width:16px;height:8px"></div><div class="rb2" style="left:432px;top:272px;width:16px;height:8px"></div><svg class="a" style="left:439px;top:267px;" width="3" height="2" shape-rendering="crispEdges"><rect x="1" y="0" width="1" height="1" fill="#000"/><rect x="0" y="1" width="3" height="1" fill="#000"/></svg><svg class="a" style="left:439px;top:275px;" width="3" height="2" shape-rendering="crispEdges"><rect x="0" y="0" width="3" height="1" fill="#000"/><rect x="1" y="1" width="1" height="1" fill="#000"/></svg>
<svg class="a" style="left:168px;top:181px" width="12" height="12"><circle cx="6" cy="6" r="5.5" fill="#fff"/><path d="M1.9 10.1 A5.6 5.6 0 0 1 10.1 1.9" fill="none" stroke="#808080" stroke-width="1"/><path d="M2.7 9.3 A4.6 4.6 0 0 1 9.3 2.7" fill="none" stroke="#404040" stroke-width="1"/><path d="M1.9 10.1 A5.6 5.6 0 0 0 10.1 1.9" fill="none" stroke="#fff" stroke-width="1"/><path d="M2.7 9.3 A4.6 4.6 0 0 0 9.3 2.7" fill="none" stroke="#d4d0c8" stroke-width="1"/></svg>
<svg class="a" style="left:168px;top:202px" width="12" height="12"><circle cx="6" cy="6" r="5.5" fill="#fff"/><path d="M1.9 10.1 A5.6 5.6 0 0 1 10.1 1.9" fill="none" stroke="#808080" stroke-width="1"/><path d="M2.7 9.3 A4.6 4.6 0 0 1 9.3 2.7" fill="none" stroke="#404040" stroke-width="1"/><path d="M1.9 10.1 A5.6 5.6 0 0 0 10.1 1.9" fill="none" stroke="#fff" stroke-width="1"/><path d="M2.7 9.3 A4.6 4.6 0 0 0 9.3 2.7" fill="none" stroke="#d4d0c8" stroke-width="1"/><circle cx="6" cy="6" r="2" fill="#000"/></svg>
<div class="sk" style="left:23px;top:247px;width:13px;height:13px;background:#fff;"></div>
<div class="sk" style="left:23px;top:271px;width:13px;height:13px;background:#fff;"></div>
<div class="sk" style="left:23px;top:343px;width:13px;height:13px;background:#fff;"></div>
<div class="rb" style="left:219px;top:290px;width:34px;height:23px"></div>
<div class="rb" style="left:452px;top:222px;width:28px;height:19px"></div>
<div class="rb" style="left:452px;top:242px;width:28px;height:19px"></div>
<div class="rb" style="left:452px;top:262px;width:28px;height:19px"></div>
<div class="rb" style="left:351px;top:282px;width:97px;height:20px"></div>
<div class="sk" style="left:275px;top:120px;width:199px;height:21px;background:#fff;"></div>
<div class="rb2" style="left:456px;top:122px;width:16px;height:17px"></div>
<svg class="a" style="left:460px;top:128px" width="7" height="4" shape-rendering="crispEdges"><polygon points="0,0 7,0 3.5,4" fill="#000"/></svg>
<div class="sk" style="left:493px;top:51px;width:440px;height:21px;background:#fff;"></div>
<div class="rb2" style="left:915px;top:53px;width:16px;height:17px"></div>
<svg class="a" style="left:919px;top:59px" width="7" height="4" shape-rendering="crispEdges"><polygon points="0,0 7,0 3.5,4" fill="#000"/></svg>
<div class="a" style="left:491px;top:72px;width:1px;height:334px;background:#808080;"></div>
<div class="a" style="left:492px;top:72px;width:1px;height:334px;background:#404040;"></div>
<svg class="a" style="left:493px;top:72px" width="424" height="317" viewBox="493 72 424 317">
<defs><filter id="bl" x="-5%" y="-5%" width="110%" height="110%"><feGaussianBlur stdDeviation="0.55"/></filter></defs>
<rect x="493" y="72" width="424" height="317" fill="#d3d3d3"/>
<ellipse cx="718.4" cy="256.2" rx="163.7" ry="113.2" fill="#000" transform="rotate(-0.4 718.4 256.2)" filter="url(#bl)"/>
<rect x="493" y="301.3" width="244" height="87.69999999999999" fill="#000"/>
<path d="M564.5 250.5 V257.5 M562 252.5 L564.5 250 L567 252.5 M562 255.5 L564.5 258 L567 255.5" stroke="#b400b4" stroke-width="1.4" fill="none"/>
<path d="M805 340 L810 335 M804.5 337 V340.5 H808 M807 334.5 H810.5 V338" stroke="#b400b4" stroke-width="1.4" fill="none"/>
<path d="M797 147 V155 M794.5 149.5 L797 147 L799.5 149.5 M794.5 153 L797 155.5 L799.5 153 M793.5 148 Q797 144.5 800.5 148 M793.5 155 Q797 158.5 800.5 155" stroke="#b400b4" stroke-width="1.1" fill="none"/>
<path d="M554.2 252.0 L554.6 248.1 L555.2 244.2 L555.9 240.4 L556.9 236.5 L558.0 232.7 L559.3 228.9 L560.8 225.1 L562.5 221.4 L564.3 217.7 L566.4 214.0 L568.6 210.4 L571.0 206.8 L573.5 203.3 L576.2 199.9 L579.1 196.5 L582.1 193.2 L585.3 189.9 L588.7 186.7 L592.2 183.6 L595.8 180.6 L599.6 177.6 L603.5 174.8 L607.5 172.0 L611.7 169.3 L616.0 166.7 L620.4 164.3 L625.0 161.9 L629.6 159.6 L634.3 157.4 L639.2 155.4 L644.1 153.5 L649.1 151.6 L654.2 149.9 L659.4 148.3 L664.6 146.9 L669.9 145.5 L675.2 144.3 L680.6 143.2 L686.1 142.2 L691.5 141.4 L697.0 140.7 L702.6 140.1 L708.1 139.6 L713.7 139.3 L719.3 139.1 L724.8 139.0 L730.4 139.1 L735.9 139.3 L741.5 139.6 L747.0 140.1 L752.4 140.7 L757.9 141.4 L763.2 142.3 L768.6 143.2 L773.9 144.3 L779.1 145.6 L784.2 146.9 L789.3 148.4 L794.3 150.0 L799.1 151.7 L804.0 153.6 L808.7 155.5 L813.3 157.6 L817.8 159.7 L822.1 162.0 L826.4 164.4 L830.5 166.9 L834.5 169.5 L838.4 172.1 L842.1 174.9 L845.7 177.8 L849.2 180.7 L852.5 183.8 L855.6 186.9 L858.6 190.1 L861.4 193.3 L864.1 196.7 L866.6 200.1 L868.9 203.5 L871.1 207.0 L873.1 210.6 L874.9 214.2 L876.5 217.9 L877.9 221.6 L879.2 225.3 L880.2 229.1 L881.1 232.9 L881.8 236.7 L882.3 240.6 L882.6 244.4 L882.8 248.3 L882.7 252.2 L882.5 256.1 L882.1 259.9 L881.4 263.8 L880.6 267.7 L879.6 271.5 L878.5 275.3 L877.1 279.1 L875.5 282.9 L873.8 286.6 L871.9 290.3 L869.8 294.0 L867.6 297.6 L865.2 301.1 L862.6 304.6 L859.8 308.1 L856.9 311.4 L853.8 314.7 L850.6 318.0 L847.2 321.1 L843.7 324.2 L840.0 327.2 L836.2 330.2 L832.2 333.0 L828.1 335.7 L823.9 338.4 L819.6 340.9 L815.1 343.4" fill="none" stroke="#0000ff" stroke-width="1" shape-rendering="crispEdges"/>
<polygon points="582.4,226.8 547.9,204.6 555.4,193.1 589.8,215.3" fill="none" stroke="#00ffff" stroke-width="1" shape-rendering="crispEdges"/>
<polygon points="643.2,175.8 628.3,137.6 641.0,132.6 656.0,170.8" fill="none" stroke="#00ffff" stroke-width="1" shape-rendering="crispEdges"/>
<polygon points="725.8,159.4 727.4,118.5 741.0,119.0 739.5,159.9" fill="none" stroke="#00ffff" stroke-width="1" shape-rendering="crispEdges"/>
<polygon points="806.6,176.9 826.2,140.9 838.2,147.4 818.7,183.4" fill="none" stroke="#00ffff" stroke-width="1" shape-rendering="crispEdges"/>
<polygon points="859.4,229.7 899.5,220.9 902.4,234.3 862.4,243.1" fill="none" stroke="#00ffff" stroke-width="1" shape-rendering="crispEdges"/>
<polygon points="842.8,296.8 871.9,325.7 862.2,335.4 833.1,306.5" fill="none" stroke="#00ffff" stroke-width="1" shape-rendering="crispEdges"/>
<path d="M807 177 L824 146" stroke="#00ffff" stroke-width="3" fill="none"/>
<polygon points="827.7,139.4 817,147.5 829,153.5" fill="#00ffff"/>
<path d="M795 177.5 H818 M806.5 166.5 V189" stroke="#00ffff" stroke-width="3" fill="none" shape-rendering="crispEdges"/>
<rect x="552" y="251" width="6" height="6" fill="none" stroke="#800000" stroke-width="2" shape-rendering="crispEdges"/>
<rect x="554" y="253" width="2" height="2" fill="#ff00ff" shape-rendering="crispEdges"/>
<rect x="812" y="341" width="6" height="6" fill="none" stroke="#800000" stroke-width="2" shape-rendering="crispEdges"/>
<rect x="814" y="343" width="2" height="2" fill="#ff00ff" shape-rendering="crispEdges"/>
<circle cx="787" cy="140" r="3.2" fill="#d3d3d3" stroke="#800000" stroke-width="1.8"/>
<rect x="786" y="139" width="2" height="2" fill="#ff00ff" shape-rendering="crispEdges"/>
</svg>
<div class="a dith" style="left:917px;top:72px;width:16px;height:317px"></div>
<div class="rb2" style="left:917px;top:72px;width:16px;height:16px"></div>
<svg class="a" style="left:921px;top:78px" width="7" height="4" shape-rendering="crispEdges"><polygon points="0,4 7,4 3.5,0" fill="#000"/></svg>
<div class="rb2" style="left:917px;top:373px;width:16px;height:16px"></div>
<svg class="a" style="left:921px;top:379px" width="7" height="4" shape-rendering="crispEdges"><polygon points="0,0 7,0 3.5,4" fill="#000"/></svg>
<div class="rb2" style="left:917px;top:191px;width:16px;height:83px"></div>
<div class="a dith" style="left:493px;top:389px;width:424px;height:16px"></div>
<div class="rb2" style="left:493px;top:389px;width:16px;height:16px"></div>
<svg class="a" style="left:498px;top:393px" width="4" height="7" shape-rendering="crispEdges"><polygon points="4,0 4,7 0,3.5" fill="#000"/></svg>
<div class="rb2" style="left:901px;top:389px;width:16px;height:16px"></div>
<svg class="a" style="left:907px;top:393px" width="4" height="7" shape-rendering="crispEdges"><polygon points="0,0 0,7 4,3.5" fill="#000"/></svg>
<div class="rb2" style="left:648px;top:389px;width:108px;height:16px"></div>
<div class="a" style="left:917px;top:389px;width:16px;height:16px;background:#d4d0c8;"></div>
<div class="a" style="left:4px;top:407px;width:19px;height:15px;box-shadow:inset 1px 1px 0 #808080,inset -1px -1px 0 #fff"></div>
<div class="a" style="left:24px;top:407px;width:56px;height:15px;box-shadow:inset 1px 1px 0 #808080,inset -1px -1px 0 #fff"></div>
<div class="a" style="left:82px;top:407px;width:57px;height:15px;box-shadow:inset 1px 1px 0 #808080,inset -1px -1px 0 #fff"></div>
<div class="a" style="left:140px;top:407px;width:94px;height:15px;box-shadow:inset 1px 1px 0 #808080,inset -1px -1px 0 #fff"></div>
<div class="a" style="left:236px;top:407px;width:681px;height:15px;box-shadow:inset 1px 1px 0 #808080,inset -1px -1px 0 #fff"></div>
<div class="a" style="left:4px;top:405px;width:489px;height:1px;background:#808080;"></div>
<div class="a" style="left:4px;top:406px;width:489px;height:1px;background:#404040;"></div>
<div class="a" style="left:4px;top:405px;width:1px;height:1px;background:#fff;"></div>
<div class="a" style="left:8px;top:409px;width:12px;height:12px;border-radius:6px;background:#00ff00;box-shadow:inset -1px -1px 0 #00a000"></div>
<svg class="a" style="left:923px;top:412px;" width="9" height="9" shape-rendering="crispEdges"><rect x="8" y="0" width="1" height="1" fill="#fff"/><rect x="7" y="1" width="1" height="1" fill="#fff"/><rect x="8" y="1" width="1" height="1" fill="#808080"/><rect x="6" y="2" width="1" height="1" fill="#fff"/><rect x="7" y="2" width="2" height="1" fill="#808080"/><rect x="5" y="3" width="1" height="1" fill="#fff"/><rect x="6" y="3" width="2" height="1" fill="#808080"/><rect x="8" y="3" width="1" height="1" fill="#fff"/><rect x="4" y="4" width="1" height="1" fill="#fff"/><rect x="5" y="4" width="2" height="1" fill="#808080"/><rect x="7" y="4" width="1" height="1" fill="#fff"/><rect x="8" y="4" width="1" height="1" fill="#808080"/><rect x="3" y="5" width="1" height="1" fill="#fff"/><rect x="4" y="5" width="2" height="1" fill="#808080"/><rect x="6" y="5" width="1" height="1" fill="#fff"/><rect x="7" y="5" width="2" height="1" fill="#808080"/><rect x="2" y="6" width="1" height="1" fill="#fff"/><rect x="3" y="6" width="2" height="1" fill="#808080"/><rect x="5" y="6" width="1" height="1" fill="#fff"/><rect x="6" y="6" width="2" height="1" fill="#808080"/><rect x="8" y="6" width="1" height="1" fill="#fff"/><rect x="1" y="7" width="1" height="1" fill="#fff"/><rect x="2" y="7" width="2" height="1" fill="#808080"/><rect x="4" y="7" width="1" height="1" fill="#fff"/><rect x="5" y="7" width="2" height="1" fill="#808080"/><rect x="7" y="7" width="1" height="1" fill="#fff"/><rect x="8" y="7" width="1" height="1" fill="#808080"/><rect x="0" y="8" width="1" height="1" fill="#fff"/><rect x="1" y="8" width="2" height="1" fill="#808080"/><rect x="3" y="8" width="1" height="1" fill="#fff"/><rect x="4" y="8" width="2" height="1" fill="#808080"/><rect x="6" y="8" width="1" height="1" fill="#fff"/><rect x="7" y="8" width="2" height="1" fill="#808080"/></svg>
<span class="t tt" id="t0" style="left:24.7px;top:7px;letter-spacing:-0.015px">CogFindEllipseTool1</span>
<span class="t " id="t1" style="left:12.5px;top:55px;letter-spacing:-0.406px">Settings</span>
<span class="t " id="t2" style="left:61.5px;top:57px;letter-spacing:-0.322px">Caliper Settings</span>
<span class="t " id="t3" style="left:146.5px;top:57px;letter-spacing:-0.314px">Caliper Scoring</span>
<span class="t " id="t4" style="left:229.5px;top:57px;letter-spacing:-0.316px">Graphics</span>
<span class="t " id="t5" style="left:284.5px;top:57px;letter-spacing:-0.455px">Results</span>
<span class="t " id="t6" style="left:331px;top:57px;letter-spacing:-0.255px">Point Results</span>
<span class="t gl" id="t7" style="left:20.5px;top:84px;letter-spacing:-0.408px">Caliper</span>
<span class="t gl" id="t8" style="left:22.5px;top:228px;letter-spacing:-0.510px">Fitter</span>
<span class="t gl" id="t9" style="left:276px;top:84px;letter-spacing:-0.162px">Expected Elliptical Arc</span>
<span class="t " id="t10" style="left:19.5px;top:106px;letter-spacing:-0.386px">Number of Calipers:</span>
<span class="t " id="t11" style="left:19.5px;top:132px;letter-spacing:-0.223px">Search Length:</span>
<span class="t " id="t12" style="left:19.5px;top:158px;letter-spacing:-0.204px">Projection Length:</span>
<span class="t " id="t13" style="left:19.5px;top:182px;letter-spacing:-0.228px">Search Direction:</span>
<span class="t " id="t14" style="left:187.5px;top:182px;letter-spacing:-0.422px">Inward</span>
<span class="t " id="t15" style="left:187px;top:203px;letter-spacing:-0.368px">Outward</span>
<span class="t " id="t16" style="left:43.75px;top:249px;letter-spacing:-0.238px">Fit Constraint: Accurate RMS Error</span>
<span class="t " id="t17" style="left:43.75px;top:273px;letter-spacing:-0.337px">Fit Constraint: Orientation</span>
<span class="t " id="t18" style="left:23px;top:297px;letter-spacing:-0.237px">Expected Orientation</span>
<span class="t " id="t19" style="left:19.5px;top:321px;letter-spacing:-0.303px">Number to Ignore:</span>
<span class="t " id="t20" style="left:43.75px;top:345px;letter-spacing:-0.258px">Decrement Number to Ignore</span>
<span class="t " id="t21" style="left:226.5px;top:296px;letter-spacing:0.031px">rad</span>
<span class="t " id="t22" style="left:275.5px;top:107px;letter-spacing:-0.213px">Selected Space Name:</span>
<span class="t " id="t23" style="left:278.75px;top:124px;letter-spacing:-0.212px">. = Use Input Image Space</span>
<span class="t " id="t24" style="left:270px;top:146px;letter-spacing:-0.385px">Center X:</span>
<span class="t " id="t25" style="left:270px;top:166px;letter-spacing:-0.297px">Center Y:</span>
<span class="t " id="t26" style="left:270.5px;top:186px;letter-spacing:-0.300px">Radius X:</span>
<span class="t " id="t27" style="left:270.5px;top:206px;letter-spacing:-0.210px">Radius Y:</span>
<span class="t " id="t28" style="left:270px;top:226px;letter-spacing:-0.170px">Rotation:</span>
<span class="t " id="t29" style="left:270px;top:246px;letter-spacing:-0.249px">Angle Start:</span>
<span class="t " id="t30" style="left:270px;top:266px;letter-spacing:-0.267px">Angle Span:</span>
<span class="t " id="t31" style="left:457.5px;top:226px;letter-spacing:-0.453px">deg</span>
<span class="t " id="t32" style="left:457.5px;top:246px;letter-spacing:-0.453px">deg</span>
<span class="t " id="t33" style="left:457.5px;top:266px;letter-spacing:-0.453px">deg</span>
<span class="t " id="t34" style="left:372.5px;top:286px;letter-spacing:-0.382px">Fit In Image</span>
<span class="t " id="t35" style="left:497px;top:56px;letter-spacing:-0.321px">Current.InputImage</span>
<span class="t " id="t36" style="left:32.5px;top:408px;letter-spacing:-0.477px">149.99ms</span>
<span class="t " id="t37" style="left:90.5px;top:408px;letter-spacing:-0.414px">164.46ms</span>
<span class="t v" id="v0" style="right:705px;top:106px;letter-spacing:-0.07px">6</span>
<span class="t v" id="v1" style="right:705px;top:132px;letter-spacing:-0.07px">30</span>
<span class="t v" id="v2" style="right:705px;top:158px;letter-spacing:-0.07px">10</span>
<span class="t v" id="v3" style="right:744.5px;top:296px;letter-spacing:-0.07px">0</span>
<span class="t v" id="v4" style="right:744.5px;top:322px;letter-spacing:-0.07px">0</span>
<span class="t v" id="v5" style="right:508px;top:146px;letter-spacing:-0.07px">252.599</span>
<span class="t v" id="v6" style="right:508px;top:166px;letter-spacing:-0.07px">188.62</span>
<span class="t v" id="v7" style="right:508px;top:186px;letter-spacing:-0.07px">120.306</span>
<span class="t v" id="v8" style="right:508px;top:206px;letter-spacing:-0.07px">83.5995</span>
<span class="t v" id="v9" style="right:508px;top:226px;letter-spacing:-0.07px">177.05</span>
<span class="t v" id="v10" style="right:508px;top:246px;letter-spacing:-0.07px">3.07097</span>
<span class="t v" id="v11" style="right:508px;top:266px;letter-spacing:-0.07px">223.06</span>
</body></html>
